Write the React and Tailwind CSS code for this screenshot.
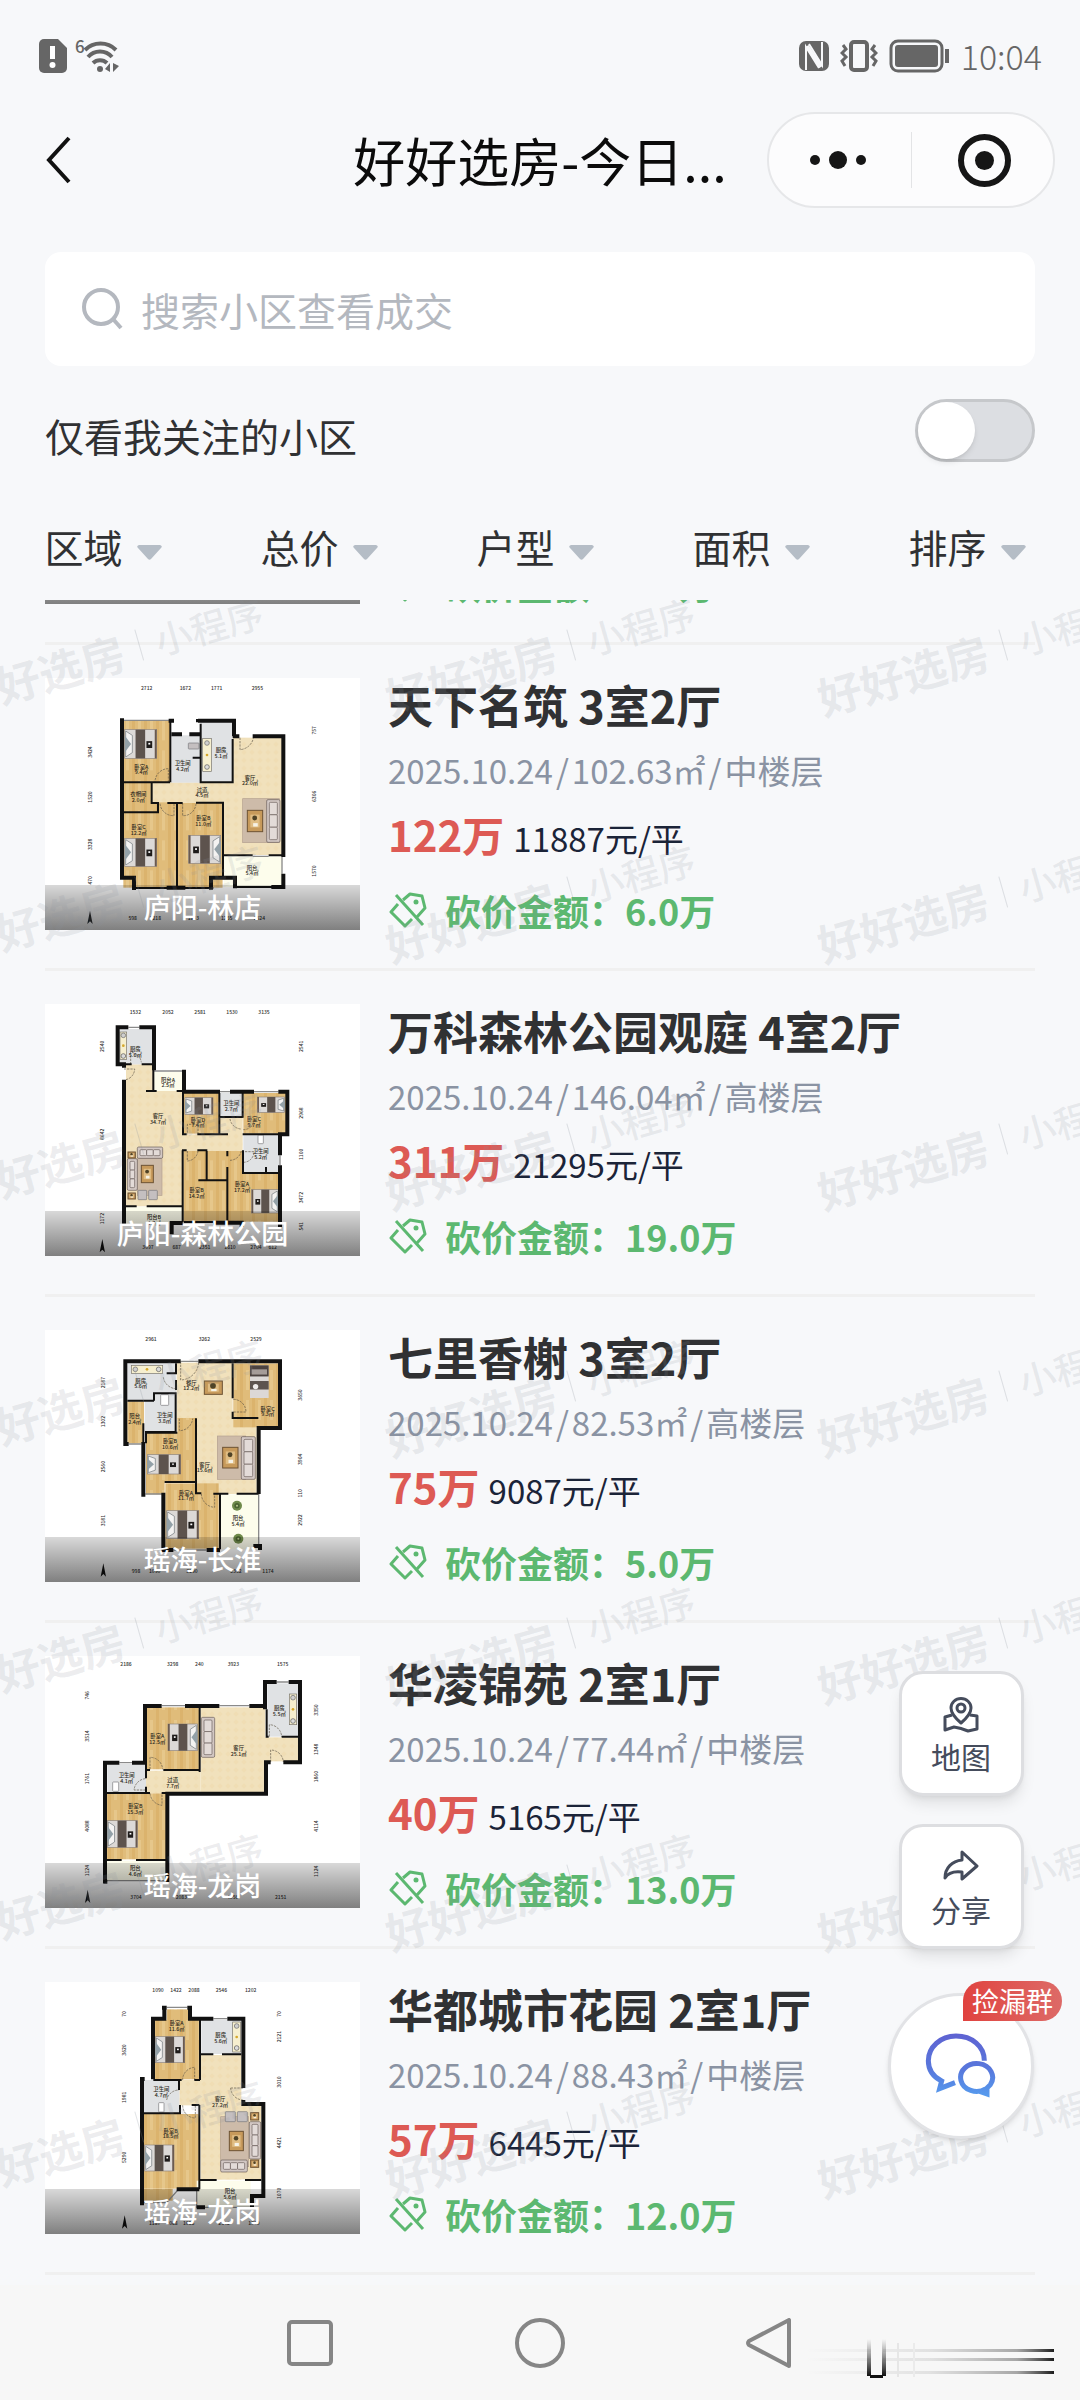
import React, { useLayoutEffect, useRef, useState } from "react";

const ROOM_FILLS = {
  wood: "url(#wood)",
  tile: "url(#tile)",
  wet: "#e0e2e4",
  balcony: "#fdfdec",
};

// Each plan is drawn in a 945 x 756 space that starts at x = 135, y = top
const PLAN_LINDIAN = {
  top: 53,
  rooms: [
    ["tile", 456, 366, 246, 62], ["tile", 698, 232, 148, 352], ["tile", 668, 366, 34, 218],
    ["wood", 368, 182, 142, 184], ["wood", 368, 366, 86, 90], ["wood", 370, 456, 160, 226],
    ["wood", 400, 426, 130, 34], ["wood", 533, 428, 135, 254],
    ["wet", 514, 225, 88, 142], ["wet", 602, 186, 94, 180], ["balcony", 672, 588, 174, 92],
  ],
  thick: "M366 174V652H402V682M506 181H522M594 181H702V228M594 176V186M698 228H718M758 228H850V590M850 640V680H814M500 682H556M396 683H408M633 688V652H705V684M514 222H546M568 222H602",
  thin: "M366 366H510M511 182V366M602 190V366H698V236M578 292H602M455 366V428H474V456H366M502 428H548M531 428V680M588 427H669V648M668 585H758M806 585H846M402 683H640M710 680H846",
  light: "M372 180H510M846 590V640M758 588H806",
  doors: "M720 232V268A44 44 0 0 0 760 234M505 365V325A40 40 0 0 0 465 365M480 430A40 40 0 0 0 522 466V430M588 430A38 38 0 0 1 548 466V430",
  beds: [[374, 208, 96, 86, "left"], [374, 534, 96, 84, "left"], [566, 525, 96, 84, "right"]],
  rugs: [[728, 415, 110, 132]],
  sofas: [[800, 418, 40, 128]],
  tables: [[742, 450, 46, 64]],
  counters: [[608, 235, 26, 98]],
  boxes: [[565, 248, 32, 18]],
  labels: [[424, 325, "卧室A", "9.4㎡"], [548, 314, "卫生间", "4.2㎡"], [663, 276, "厨房", "5.1㎡"], [750, 358, "客厅", "22.0㎡"], [606, 394, "过道", "4.5㎡"], [415, 408, "衣帽间", "2.0㎡"], [416, 506, "卧室C", "12.2㎡"], [610, 480, "卧室B", "11.0㎡"], [756, 628, "阳台", "5.4㎡"]],
  topDims: [84, [440, "2712"], [556, "1672"], [650, "1771"], [772, "2955"]],
  bottomDims: [775, [398, "598"], [466, "2218"], [580, "1833"], [680, "1255"], [778, "2524"]],
  leftDims: [270, [275, "3424"], [410, "1520"], [552, "3328"], [660, "470"]],
  rightDims: [942, [210, "757"], [408, "6306"], [632, "1570"]],
};

const PLAN_FOREST = {
  top: 71,
  rooms: [
    ["tile", 378, 252, 82, 82], ["tile", 378, 332, 170, 346], ["tile", 546, 462, 182, 50], ["tile", 660, 410, 68, 54],
    ["wet", 356, 146, 104, 106], ["wet", 660, 338, 66, 72], ["wet", 730, 464, 108, 114],
    ["balcony", 462, 274, 88, 58], ["balcony", 378, 680, 168, 50],
    ["wood", 552, 338, 104, 122], ["wood", 730, 338, 130, 122], ["wood", 550, 512, 178, 214],
    ["wood", 684, 578, 154, 146],
  ],
  thick: "M353 135V258M348 141H385M418 141H462V270M348 252H378M372 298V730M372 258V262M552 268V334H660M690 334H762M835 334H862V462H840V525M840 555V740M515 762V728H548M640 727H684M684 727H725V740",
  thin: "M378 252H395M425 252H460V332M438 332H470M530 332H552M549 332V462M546 462H560M592 462H684M658 338V462M658 410H728M728 338V412M728 462H860M729 510V578H838M798 560V578M620 512V600M595 600H682M682 512V528M682 560V726M546 510H560M592 510H622M548 510V726M378 678H410M440 678H548M552 725H640",
  light: "M385 141H418M660 334H690M762 334H835M840 525V555M462 272H550",
  doors: "M378 298A34 34 0 0 0 404 266H372M392 252V216A34 34 0 0 1 424 246M594 462V432H562V462M562 512V542A34 34 0 0 0 594 512M690 416A36 36 0 0 0 722 446M762 420A32 32 0 0 1 730 448M690 540A36 36 0 0 0 724 512M730 546A32 32 0 0 0 762 514H730",
  beds: [[555, 352, 84, 50, "left"], [772, 350, 82, 46, "right"], [755, 628, 80, 70, "right"]],
  rugs: [[412, 535, 74, 110]],
  sofas: [[382, 535, 30, 95], [412, 500, 76, 34]],
  tables: [[424, 555, 36, 52], [384, 515, 22, 18], [384, 638, 22, 18]],
  counters: [[360, 155, 20, 82]],
  boxes: [[414, 630, 26, 28], [446, 630, 26, 28], [774, 464, 16, 26]],
  labels: [[406, 212, "厨房", "5.6㎡"], [504, 304, "阳台A", "2.5㎡"], [474, 414, "客厅", "34.7㎡"], [594, 424, "卧室D", "7.4㎡"], [694, 374, "卫生间", "2.7㎡"], [762, 422, "卧室C", "9.7㎡"], [782, 518, "卫生间", "5.2㎡"], [590, 636, "卧室B", "14.2㎡"], [726, 618, "卧室A", "17.2㎡"], [462, 716, "阳台B", "4.7㎡"]],
  topDims: [96, [406, "1532"], [504, "2052"], [600, "2581"], [696, "1530"], [792, "3135"]],
  bottomDims: [800, [444, "3097"], [530, "687"], [614, "2351"], [690, "1610"], [768, "2704"], [818, "612"]],
  leftDims: [307, [198, "2540"], [462, "8642"], [715, "1172"]],
  rightDims: [905, [198, "2541"], [398, "2968"], [522, "1100"], [652, "3472"], [738, "541"]],
};

const PLAN_CHANGHUAI = {
  top: 60,
  rooms: [
    ["tile", 530, 158, 168, 168], ["tile", 590, 322, 180, 230],
    ["wood", 700, 160, 134, 192], ["wood", 382, 274, 50, 126], ["wood", 438, 368, 150, 150],
    ["wood", 438, 515, 56, 38], ["wood", 532, 324, 56, 50], ["wood", 496, 520, 160, 196],
    ["wet", 382, 160, 146, 112], ["wet", 434, 250, 94, 116], ["balcony", 662, 553, 114, 165],
  ],
  thick: "M376 148V402M370 402H386M370 154H542M595 154H840V354H776V552M430 396V560M490 548V720H520M620 720H660M760 708H780V720",
  thin: "M528 160V190H500M528 210V240M462 272V250H527V366H438V400M430 340V398M382 272H462M438 368H532M588 325V550H604M494 516H588M640 551H660V718M698 160V265M698 305V324H775M660 551H685M710 551H775",
  light: "M386 402H424M436 552H486M542 154H595M776 552V708M520 720H620M782 354H830",
  doors: "M542 154V210A56 56 0 0 0 596 156M490 202A40 40 0 0 0 528 236M538 326V362A40 40 0 0 0 578 326M700 268A38 38 0 0 1 738 306H700M604 552A42 42 0 0 0 644 592V552",
  beds: [[750, 166, 56, 98, "top"], [442, 434, 100, 58, "left"], [500, 602, 96, 84, "left"]],
  rugs: [[652, 378, 85, 130]],
  sofas: [[724, 380, 42, 128]],
  tables: [[613, 213, 54, 40], [668, 412, 46, 62]],
  counters: [[394, 166, 94, 24]],
  boxes: [[482, 254, 24, 32]],
  plants: [[711, 587], [715, 686]],
  labels: [[422, 218, "厨房", "5.6㎡"], [574, 224, "餐厅", "12.2㎡"], [803, 302, "卧室C", "9.3㎡"], [404, 324, "阳台", "2.4㎡"], [494, 322, "卫生间", "3.8㎡"], [510, 400, "卧室B", "10.6㎡"], [614, 470, "客厅", "15.6㎡"], [558, 554, "卧室A", "11.7㎡"], [714, 630, "阳台", "5.4㎡"]],
  topDims: [88, [453, "2961"], [613, "3262"], [768, "2529"]],
  bottomDims: [784, [408, "998"], [464, "1090"], [576, "3290"], [708, "2352"], [804, "1174"]],
  leftDims: [310, [218, "2187"], [335, "1302"], [470, "2560"], [632, "3181"]],
  rightDims: [902, [255, "3650"], [448, "3904"], [550, "110"], [630, "2922"]],
};

const PLAN_HUALING = {
  top: 78,
  rooms: [
    ["tile", 602, 232, 194, 256], ["tile", 438, 422, 164, 68], ["tile", 794, 322, 100, 72],
    ["wood", 440, 232, 158, 186], ["wood", 320, 490, 178, 198],
    ["wet", 802, 160, 92, 160], ["wet", 322, 402, 116, 84], ["balcony", 320, 692, 178, 60],
  ],
  thick: "M430 228H485M555 228H658M748 228H800M795 238V156H830M866 156H900V397H850M812 397H798V491H502V690M435 222V402M396 398H438M358 398H315V760M502 690V756M310 755H322",
  thin: "M599 232V420H490M438 420H450M599 420V426M438 402V445M438 470V490M320 489H450M485 489H505M845 320H894M800 238V320H806M320 690H365M408 690H500",
  light: "M485 227H555M658 227H748M830 156H866M358 398H396M320 752H500M318 694V750",
  doors: "M450 418V382A38 38 0 0 1 488 418M436 446A38 38 0 0 0 402 480H436M450 490A40 40 0 0 0 486 526V490M808 320V284A38 38 0 0 1 845 320M812 396V360A38 38 0 0 1 850 396",
  beds: [[504, 282, 88, 80, "right"], [322, 572, 90, 80, "left"]],
  rugs: [],
  sofas: [[604, 262, 40, 120]],
  tables: [],
  counters: [[868, 192, 22, 92]],
  boxes: [[338, 456, 18, 28]],
  labels: [[472, 325, "卧室A", "12.5㎡"], [838, 240, "厨房", "5.5㎡"], [716, 360, "客厅", "25.1㎡"], [380, 442, "卫生间", "4.1㎡"], [518, 456, "过道", "7.7㎡"], [406, 534, "卧室B", "15.3㎡"], [406, 720, "阳台", "4.6㎡"]],
  topDims: [104, [378, "2186"], [518, "3298"], [598, "240"], [700, "3923"], [848, "1575"]],
  bottomDims: [803, [408, "3704"], [544, "2083"], [698, "4056"], [842, "2151"]],
  leftDims: [263, [196, "746"], [318, "3514"], [446, "1761"], [588, "4088"], [722, "1124"]],
  rightDims: [950, [240, "3350"], [358, "1348"], [440, "1860"], [588, "4114"], [724, "1124"]],
};

const PLAN_HUADU = {
  top: 66,
  rooms: [
    ["tile", 602, 285, 122, 374], ["tile", 538, 360, 66, 76], ["tile", 722, 436, 62, 222],
    ["wood", 465, 180, 132, 178], ["wood", 500, 148, 66, 34], ["wood", 432, 462, 166, 224], ["wood", 432, 686, 86, 36],
    ["wet", 604, 180, 120, 102], ["wet", 432, 360, 106, 98], ["balcony", 590, 662, 162, 84],
  ],
  thick: "M459 170V358M454 176H493V138M570 138V176H640M682 176H730V384M730 420V432H790V708H756V742M426 352V736M420 357H434M530 688H598M590 742H615M486 143H500M562 143H576",
  thin: "M460 360H545M583 360H600M600 180V360M600 283H640M666 283H724M537 362V390M432 460H540V435M598 435V688M575 435H598M600 660H650M735 660H784",
  light: "M500 142H562M640 176H682M590 692V742H750M432 728H500L532 692",
  doors: "M548 360V356A38 38 0 0 1 584 322V360M500 420A38 38 0 0 1 537 390M548 436A38 38 0 0 0 586 474V436M692 384A38 38 0 0 0 730 420M692 384H730",
  beds: [[466, 230, 88, 78, "left"], [434, 555, 88, 78, "left"]],
  rugs: [[662, 470, 84, 150]],
  sofas: [[748, 485, 34, 112], [662, 600, 80, 36]],
  tables: [[688, 514, 42, 58], [752, 458, 24, 22], [752, 600, 24, 22]],
  counters: [[698, 186, 24, 90]],
  boxes: [[676, 455, 30, 30], [712, 455, 30, 30], [476, 428, 16, 28]],
  labels: [[530, 196, "卧室A", "11.6㎡"], [662, 232, "厨房", "5.6㎡"], [484, 394, "卫生间", "4.7㎡"], [660, 424, "客厅", "27.2㎡"], [512, 518, "卧室B", "18.5㎡"], [690, 700, "阳台", "5.6㎡"]],
  topDims: [92, [474, "1090"], [528, "1422"], [582, "2088"], [664, "2546"], [752, "1202"]],
  bottomDims: [790, [464, "1187"], [516, "2068"], [566, "1086"], [672, "2546"], [762, "1200"]],
  leftDims: [374, [162, "70"], [270, "3620"], [412, "1981"], [592, "5290"]],
  rightDims: [838, [162, "70"], [230, "2121"], [366, "3010"], [548, "4421"], [700, "1070"]],
};

const LISTINGS = [
  { id: 1, name: "林店花园", rooms: "2室2厅", area: "庐阳-林店", date: "2025.10.24", size: "88.50", floor: "中楼层", total: "98", unit: "11073", cut: "5.0", plan: PLAN_LINDIAN },
  { id: 2, name: "天下名筑", rooms: "3室2厅", area: "庐阳-林店", date: "2025.10.24", size: "102.63", floor: "中楼层", total: "122", unit: "11887", cut: "6.0", plan: PLAN_LINDIAN },
  { id: 3, name: "万科森林公园观庭", rooms: "4室2厅", area: "庐阳-森林公园", date: "2025.10.24", size: "146.04", floor: "高楼层", total: "311", unit: "21295", cut: "19.0", plan: PLAN_FOREST },
  { id: 4, name: "七里香榭", rooms: "3室2厅", area: "瑶海-长淮", date: "2025.10.24", size: "82.53", floor: "高楼层", total: "75", unit: "9087", cut: "5.0", plan: PLAN_CHANGHUAI },
  { id: 5, name: "华凌锦苑", rooms: "2室1厅", area: "瑶海-龙岗", date: "2025.10.24", size: "77.44", floor: "中楼层", total: "40", unit: "5165", cut: "13.0", plan: PLAN_HUALING },
  { id: 6, name: "华都城市花园", rooms: "2室1厅", area: "瑶海-龙岗", date: "2025.10.24", size: "88.43", floor: "中楼层", total: "57", unit: "6445", cut: "12.0", plan: PLAN_HUADU },
];

const FILTERS = ["区域", "总价", "户型", "面积", "排序"];

function Bed({ x, y, w, h, side }) {
  if (side === "top") {
    return (
      <g>
        <rect x={x} y={y} width={w} height={h} fill="#dcd8d6" />
        <rect x={x} y={y} width={w} height={h * 0.34} fill="#4c4340" />
        <rect x={x + 5} y={y + 12} width={w - 10} height={h * 0.16} fill="#a59c98" />
        <rect x={x} y={y + h * 0.48} width={w} height={h * 0.26} fill="#5d544f" />
        <circle cx={x + w * 0.3} cy={y + h * 0.65} r="8" fill="#efeceb" />
      </g>
    );
  }
  const flip = side === "right" ? `translate(${2 * x + w} 0) scale(-1 1)` : undefined;
  return (
    <g transform={flip}>
      <rect x={x} y={y} width={w} height={h} fill="#dcd9d7" stroke="#8d8581" strokeWidth="2" />
      <path d={`M${x + 3} ${y + 4}L${x + w * 0.24} ${y + h * 0.2}V${y + h * 0.8}L${x + 3} ${y + h - 4}Z`} fill="#f4f3f2" stroke="#6d7478" strokeWidth="2" />
      <path d={`M${x} ${y + h * 0.2}L${x + w * 0.2} ${y + h * 0.5}L${x} ${y + h * 0.8}Z`} fill="#93a1a8" />
      <rect x={x + w * 0.34} y={y} width={w * 0.3} height={h} fill="#5d534d" />
      <rect x={x + w * 0.94} y={y} width={w * 0.06} height={h} fill="#6a5a50" />
      <rect x={x + w * 0.68} y={y + h * 0.4} width={w * 0.18} height={h * 0.24} fill="#1e1b1a" />
      <rect x={x + w * 0.74} y={y + h * 0.46} width={w * 0.06} height={h * 0.06} fill="#fff" />
    </g>
  );
}

function Sofa({ x, y, w, h }) {
  const tall = h > w;
  const seats = [0, 1, 2];
  return (
    <g fill="#d3c8c4" stroke="#665a58" strokeWidth="2">
      <rect x={x} y={y} width={w} height={h} rx="4" />
      {seats.map((i) =>
        tall ? (
          <rect key={i} x={x + 8} y={y + 8 + (i * (h - 16)) / 3} width={w - 16} height={(h - 16) / 3} rx="3" fill="#e3dbd8" />
        ) : (
          <rect key={i} x={x + 8 + (i * (w - 16)) / 3} y={y + 8} width={(w - 16) / 3} height={h - 16} rx="3" fill="#e3dbd8" />
        )
      )}
    </g>
  );
}

function FloorPlan({ plan, name }) {
  const [topY, ...topDims] = plan.topDims;
  const [bottomY, ...bottomDims] = plan.bottomDims;
  const [leftX, ...leftDims] = plan.leftDims;
  const [rightX, ...rightDims] = plan.rightDims;

  return (
    <svg viewBox={`135 ${plan.top} 945 756`} className="block w-full h-full bg-white" role="img" aria-label={`${name}户型图`}>
      {plan.rooms.map(([type, x, y, w, h], i) => (
        <rect key={i} x={x} y={y} width={w} height={h} fill={ROOM_FILLS[type]} />
      ))}
      {plan.rugs.map(([x, y, w, h], i) => (
        <rect key={i} x={x} y={y} width={w} height={h} fill="#cdbba9" stroke="#b3a08f" strokeWidth="2" />
      ))}
      {plan.sofas.map(([x, y, w, h], i) => (
        <Sofa key={i} x={x} y={y} w={w} h={h} />
      ))}
      {plan.tables.map(([x, y, w, h], i) => (
        <g key={i}>
          <rect x={x} y={y} width={w} height={h} fill="#c79a5b" stroke="#6e5334" strokeWidth="3" />
          <rect x={x + w * 0.2} y={y + h * 0.2} width={w * 0.6} height={h * 0.6} fill="#e0bd84" />
          <circle cx={x + w * 0.48} cy={y + h * 0.36} r={w * 0.16} fill="#4f4327" />
          <rect x={x + w * 0.38} y={y + h * 0.6} width={w * 0.3} height={h * 0.16} fill="#f6f2e6" />
        </g>
      ))}
      {plan.counters.map(([x, y, w, h], i) => (
        <g key={i}>
          <rect x={x} y={y} width={w} height={h} fill="#f6efcf" stroke="#77736a" strokeWidth="2" />
          <circle cx={x + Math.min(w, h) / 2} cy={y + Math.min(w, h) / 2} r="7" fill="#cfcfcf" stroke="#666" strokeWidth="2" />
          <circle cx={x + w / 2} cy={y + h / 2} r="4" fill="#d5a72b" />
          <circle cx={x + w - Math.min(w, h) / 2} cy={y + h - Math.min(w, h) / 2} r="7" fill="#dcdcdc" stroke="#555" strokeWidth="2" />
        </g>
      ))}
      {plan.boxes.map(([x, y, w, h], i) => (
        <rect key={i} x={x} y={y} width={w} height={h} rx="2" fill={w === h || w > 24 ? "#c4bfc0" : "#fff"} stroke="#77777a" strokeWidth="2" />
      ))}
      {(plan.plants || []).map(([x, y]) => (
        <g key={y}>
          <circle cx={x} cy={y} r="15" fill="#6f8a4a" />
          <circle cx={x} cy={y} r="8" fill="#4a6330" />
          <circle cx={x} cy={y} r="3" fill="#b7c48e" />
        </g>
      ))}
      {plan.beds.map(([x, y, w, h, side], i) => (
        <Bed key={i} x={x} y={y} w={w} h={h} side={side} />
      ))}
      <path d={plan.doors} fill="none" stroke="#5f5647" strokeWidth="2" strokeDasharray="7 3" />
      <path d={plan.light} fill="none" stroke="#8a8a8a" strokeWidth="4" />
      <path d={plan.thin} fill="none" stroke="#111" strokeWidth="6" />
      <path d={plan.thick} fill="none" stroke="#111" strokeWidth="12" />

      <g fill="#2b2820" fontSize="16" fontWeight="500" textAnchor="middle">
        {plan.labels.map(([x, y, room, size]) => (
          <text key={`${x}-${y}`}>
            <tspan x={x} y={y}>{room}</tspan>
            <tspan x={x} y={y + 17}>{size}</tspan>
          </text>
        ))}
      </g>

      <g fill="#333" fontSize="15" fontWeight="500" textAnchor="middle">
        {topDims.map(([x, text]) => (
          <text key={x} x={x} y={topY + 5}>{text}</text>
        ))}
        {bottomDims.map(([x, text]) => (
          <text key={x} x={x} y={bottomY + 5}>{text}</text>
        ))}
        {leftDims.map(([y, text]) => (
          <text key={y} transform={`translate(${leftX + 5} ${y}) rotate(-90)`}>{text}</text>
        ))}
        {rightDims.map(([y, text]) => (
          <text key={y} transform={`translate(${rightX + 5} ${y}) rotate(-90)`}>{text}</text>
        ))}
      </g>
      <path
        d={`M${leftX} ${bottomY - 24}L${leftX + 8} ${bottomY + 16}L${leftX} ${bottomY + 8}L${leftX - 8} ${bottomY + 16}Z`}
        fill="#111"
      />
    </svg>
  );
}

function PlanPatterns() {
  return (
    <svg className="absolute w-0 h-0" aria-hidden="true">
      <defs>
        <pattern id="wood" width="36" height="90" patternUnits="userSpaceOnUse">
          <rect width="36" height="90" fill="#e0bc7a" />
          <rect x="0" width="9" height="90" fill="#dbb36d" />
          <rect x="18" width="9" height="60" fill="#e6c78b" />
        </pattern>
        <pattern id="tile" width="24" height="24" patternUnits="userSpaceOnUse">
          <rect width="24" height="24" fill="#f1e1bc" />
          <path d="M12 4L20 12L12 20L4 12Z" fill="#f0ddb4" />
        </pattern>
      </defs>
    </svg>
  );
}

function StatusBar() {
  return (
    <div className="h-28 pl-[39px] pr-[38px] flex items-center justify-between text-[#666]">
      <div className="flex items-center gap-2">
        <svg width="28" height="34" viewBox="0 0 28 34" fill="currentColor" aria-hidden="true">
          <path d="M5 0H19L28 9V29A5 5 0 0 1 23 34H5A5 5 0 0 1 0 29V5A5 5 0 0 1 5 0Z" />
          <path d="M11 7H16V20H11Z" fill="#fff" />
          <circle cx="13.5" cy="26" r="3" fill="#fff" />
        </svg>
        <svg width="46" height="36" viewBox="0 0 46 36" fill="none" stroke="currentColor" strokeWidth="4" aria-hidden="true">
          <text x="0" y="15" fontSize="17" fontWeight="500" fill="currentColor" stroke="none">6</text>
          <path d="M10 12A22 22 0 0 1 41 12" />
          <path d="M13 19A16 16 0 0 1 37 19" />
          <path d="M18 25A10 10 0 0 1 32 25" />
          <circle cx="25" cy="31" r="3" fill="currentColor" stroke="none" />
          <path d="M35 25V34L30 31ZM38 25L44 28L38 34Z" fill="currentColor" stroke="none" />
        </svg>
      </div>
      <div className="flex items-center gap-[11px]">
        <svg width="30" height="32" viewBox="0 0 30 32" aria-hidden="true">
          <rect x="0" y="1" width="30" height="30" rx="7" fill="currentColor" />
          <path d="M7 30V7L20 28" fill="none" stroke="#f7f8fa" strokeWidth="2" />
          <path d="M23 2V25L10 4" fill="none" stroke="#f7f8fa" strokeWidth="2" />
          <path d="M8 6L22 27" stroke="#f7f8fa" strokeWidth="4" />
        </svg>
        <svg width="38" height="34" viewBox="0 0 38 34" fill="none" stroke="currentColor" strokeWidth="4" aria-hidden="true">
          <rect x="11" y="3" width="16" height="28" rx="3" />
          <path d="M3 6L6 10L2 14L6 18L2 22L5 27M35 6L32 10L36 14L32 18L36 22L33 27" strokeWidth="3" />
        </svg>
        <svg width="61" height="34" viewBox="0 0 61 34" fill="none" stroke="currentColor" strokeWidth="3" aria-hidden="true">
          <rect x="2" y="2" width="51" height="30" rx="7" />
          <rect x="6" y="6" width="43" height="22" rx="3" fill="currentColor" stroke="none" />
          <path d="M58 10V24" strokeWidth="4" />
        </svg>
        <span className="text-[34px] leading-[38px] font-light">10:04</span>
      </div>
    </div>
  );
}

function NavBar() {
  return (
    <div className="h-24 px-[25px] grid grid-cols-[1fr_auto_1fr] items-center">
      <button type="button" aria-label="返回" className="ml-5 justify-self-start">
        <svg width="28" height="48" viewBox="0 0 28 48" fill="none" stroke="#111" strokeWidth="4">
          <path d="M24 2L4 24L24 46" />
        </svg>
      </button>
      <h1 className="text-[52px] leading-[64px] text-[#0b0b0b]">好好选房-今日...</h1>
      <div className="justify-self-end w-[288px] h-24 rounded-full border-2 border-[#e6e7e9] bg-[#fcfcfd] flex items-center">
        <button type="button" aria-label="更多" className="flex-1 h-full pr-1 flex items-center justify-center gap-[9px]">
          <span className="size-[10px] rounded-full bg-[#161616]" />
          <span className="size-[18px] rounded-full bg-[#161616]" />
          <span className="size-[10px] rounded-full bg-[#161616]" />
        </button>
        <span className="w-px h-14 bg-[#e3e4e6]" />
        <button type="button" aria-label="关闭" className="flex-1 h-full pl-1 flex items-center justify-center">
          <span className="size-[53px] rounded-full border-[6px] border-[#161616] flex items-center justify-center">
            <span className="size-[19px] rounded-full bg-[#161616]" />
          </span>
        </button>
      </div>
    </div>
  );
}

function Header() {
  const [onlyFollowed, setOnlyFollowed] = useState(false);

  return (
    <header className="shrink-0">
      <StatusBar />
      <NavBar />

      <div className="mx-[45px] mt-11 h-[114px] px-9 rounded-2xl bg-white flex items-center gap-[18px]">
        <svg width="42" height="42" viewBox="0 0 42 42" fill="none" stroke="#b4b8bf" strokeWidth="4" aria-hidden="true">
          <circle cx="20" cy="19" r="17" />
          <path d="M32 31L40 40" />
        </svg>
        <input
          type="search"
          aria-label="搜索小区"
          placeholder="搜索小区查看成交"
          className="flex-1 min-w-0 h-full bg-transparent outline-none text-[39px] text-[#303133] placeholder:text-[#b4b8bf]"
        />
      </div>

      <label className="mx-[45px] mt-[33px] flex items-end justify-between">
        <span className="text-[39px] leading-[54px] text-[#303133]">仅看我关注的小区</span>
        <input
          type="checkbox"
          role="switch"
          checked={onlyFollowed}
          onChange={(e) => setOnlyFollowed(e.target.checked)}
          className="appearance-none w-[120px] h-[63px] rounded-full border-[3px] border-[#c6c8cb] bg-[#dcdee2] checked:bg-[#5cb870] before:block before:size-[57px] before:rounded-full before:bg-white before:shadow-md checked:before:ml-auto"
        />
      </label>

      <div className="mt-[34px] h-[104px] pb-1 flex items-center">
        {FILTERS.map((filter) => (
          <button key={filter} type="button" className="flex-1 pr-[10px] flex items-center justify-center gap-[14px]">
            <span className="text-[39px] leading-[48px] text-[#303133]">{filter}</span>
            <svg width="25" height="15" viewBox="0 0 25 15" className="mt-3" aria-hidden="true">
              <path d="M2 0H23Q26 1 24 3L14 14Q12.500 15.500 11 14L1 3Q-1 1 2 0Z" fill="#b5bdc6" />
            </svg>
          </button>
        ))}
      </div>
    </header>
  );
}

function BargainIcon() {
  return (
    <svg width="39" height="36" viewBox="-2 0 39 36" fill="none" stroke="currentColor" strokeWidth="3" strokeLinejoin="round" aria-hidden="true">
      <path d="M6 3L33 33" />
      <path d="M13 8L20 2L32 4L35 16L27 25" />
      <path d="M8 12L1 20L15 34L22 27" />
      <circle cx="26" cy="10" r="2.500" fill="currentColor" stroke="none" />
    </svg>
  );
}

function ListingRow({ item }) {
  return (
    <li className="pt-[33px] pb-[38px] border-b-[3px] border-[#f0f0f0] flex items-start gap-7">
      <div className="relative shrink-0 w-[315px] h-[252px] overflow-hidden">
        <FloorPlan plan={item.plan} name={item.name} />
        <p className="absolute inset-x-0 bottom-0 h-[45px] text-center text-[27px] leading-[44px] font-medium text-white bg-linear-to-b from-black/15 to-black/50">
          {item.area}
        </p>
      </div>

      <div className="flex-1 min-w-0">
        <h2 className="text-[45px] leading-[54px] font-bold text-[#303133] whitespace-nowrap">
          {item.name} {item.rooms}
        </h2>
        <p className="mt-4 flex gap-[3px] text-[33px] leading-[44px] text-[#8a93a3]">
          <span>{item.date}</span>
          <span>/</span>
          <span>{item.size}㎡</span>
          <span>/</span>
          <span>{item.floor}</span>
        </p>
        <p className="mt-4 h-[52px] flex items-baseline gap-[9px]">
          <span className="text-[42px] leading-[52px] font-bold text-[#dd5a54]">{item.total}万</span>
          <span className="text-[33px] leading-9 text-[#1b2438]">{item.unit}元/平</span>
        </p>
        <p className="mt-8 flex items-center gap-[18px] text-[36px] leading-9 font-bold text-[#5cb870]">
          <BargainIcon />
          砍价金额：{item.cut}万
        </p>
      </div>
    </li>
  );
}

function Watermark() {
  return (
    <div className="absolute inset-0 overflow-hidden pointer-events-none" aria-hidden="true">
      <div className="-mt-[70px] grid grid-cols-[repeat(3,432px)] auto-rows-[247px] justify-center">
        {Array.from({ length: 21 }, (_, i) => (
          <div key={i} className="flex items-center justify-center">
            <div className="shrink-0 -rotate-[16deg] flex items-center gap-4 whitespace-nowrap text-[#8c929c]/16">
              <span className="text-[44px] leading-none font-bold">好好选房</span>
              <span className="w-px h-8 bg-[#8c929c]/25" />
              <span className="text-[37px] leading-none font-medium">小程序</span>
            </div>
          </div>
        ))}
      </div>
    </div>
  );
}

function FloatingActions() {
  const card =
    "size-[125px] rounded-3xl border-[3px] border-[#dddee1] bg-white shadow-lg flex flex-col items-center text-[30px] leading-9 text-[#454c5c]";

  return (
    <div className="absolute right-[46px] bottom-[146px] flex flex-col items-center gap-7">
      <button type="button" className={`${card} pt-[23px] gap-[5px]`}>
        <svg width="36" height="36" viewBox="0 0 36 36" fill="none" stroke="currentColor" strokeWidth="3" strokeLinejoin="round" aria-hidden="true">
          <path d="M18 26C11 20 8 16 8 11A10 9.500 0 0 1 28 11C28 16 25 20 18 26Z" />
          <circle cx="18" cy="11" r="4" />
          <path d="M9 18L2 20V33L11 30Q18 31 25 34L34 32V19L27 18" />
        </svg>
        地图
      </button>
      <button type="button" className={`${card} pt-[23px] gap-[9px]`}>
        <svg width="36" height="32" viewBox="0 0 36 32" fill="none" stroke="currentColor" strokeWidth="3" strokeLinejoin="round" aria-hidden="true">
          <path d="M19 2L34 16L19 29V22C11 21 5 23 2 28C2 18 9 11 19 10Z" />
        </svg>
        分享
      </button>
      <button type="button" className="relative mt-4 size-[146px] rounded-full border-[3px] border-[#e2e3e6] bg-white shadow-md flex items-center justify-center">
        <svg width="72" height="68" viewBox="440 1184 216 204" fill="none" stroke="url(#chat)" strokeWidth="15" aria-hidden="true">
          <defs>
            <linearGradient id="chat" gradientUnits="userSpaceOnUse" x1="0" y1="1190" x2="0" y2="1385">
              <stop offset="0" stopColor="#5f63d2" />
              <stop offset="0.55" stopColor="#5878dc" />
              <stop offset="1" stopColor="#569ff0" />
            </linearGradient>
          </defs>
          <path d="M618 1270C618 1226 580 1196 533 1196C486 1196 450 1230 450 1270C450 1300 468 1320 490 1331L484 1354L530 1336" />
          <path d="M622 1355A48 42 0 1 1 636 1342L626 1352L626 1370L604 1362" />
        </svg>
        <span className="absolute -top-[15px] -right-[31px] h-10 px-[9px] rounded-full rounded-bl-md bg-linear-to-r from-[#e0423f] to-[#dd6a67] text-[27px] leading-10 text-white whitespace-nowrap">
          捡漏群
        </span>
      </button>
    </div>
  );
}

function SystemNav() {
  return (
    <nav className="relative shrink-0 h-[115px] bg-[#f7f7f7] flex items-center justify-center gap-[180px]">
      <button type="button" aria-label="最近任务">
        <svg width="50" height="50" viewBox="0 0 50 50" fill="none" stroke="#868686" strokeWidth="4">
          <rect x="4" y="4" width="42" height="42" rx="3" />
        </svg>
      </button>
      <button type="button" aria-label="主屏幕">
        <svg width="50" height="50" viewBox="0 0 50 50" fill="none" stroke="#868686" strokeWidth="4">
          <circle cx="25" cy="25" r="23" />
        </svg>
      </button>
      <button type="button" aria-label="后退">
        <svg width="50" height="50" viewBox="0 0 50 50" fill="none" stroke="#868686" strokeWidth="4" strokeLinejoin="round">
          <path d="M44 2V48L4 27Q2 25 4 23Z" />
        </svg>
      </button>
      <svg width="260" height="44" viewBox="0 0 260 44" className="absolute right-[24px] bottom-[21px]" aria-hidden="true">
        <defs>
          <linearGradient id="streak" x1="0" x2="1" y1="0" y2="0">
            <stop offset="0" stopColor="#777" stopOpacity="0" />
            <stop offset="0.5" stopColor="#666" stopOpacity="0.15" />
            <stop offset="0.85" stopColor="#444" stopOpacity="0.45" />
            <stop offset="1" stopColor="#111" stopOpacity="0.95" />
          </linearGradient>
          <linearGradient id="drop" x1="0" x2="0" y1="0" y2="1">
            <stop offset="0" stopColor="#333" stopOpacity="0" />
            <stop offset="1" stopColor="#111" />
          </linearGradient>
        </defs>
        <rect x="10" y="14" width="248" height="3" fill="url(#streak)" />
        <rect x="10" y="23" width="248" height="3" fill="url(#streak)" />
        <rect x="10" y="36" width="248" height="3" fill="url(#streak)" />
        <rect x="75" y="8" width="12" height="34" fill="#f7f7f7" />
        <rect x="71" y="4" width="4" height="37" fill="url(#drop)" />
        <rect x="86" y="4" width="4" height="37" fill="url(#drop)" />
        <rect x="74" y="40" width="13" height="3" fill="#111" />
        <rect x="101" y="8" width="2" height="34" fill="#e6e6e6" />
        <rect x="117" y="8" width="2" height="34" fill="#ebebeb" />
      </svg>
    </nav>
  );
}

function App() {
  const listRef = useRef(null);

  // the list opens just before the end of the first listing
  useLayoutEffect(() => {
    listRef.current.scrollTop = 281;
  }, []);

  return (
    <div className="h-screen flex flex-col bg-[#f7f8fa] font-['Noto_Sans_CJK_SC',sans-serif]">
      <PlanPatterns />
      <Header />
      <main className="relative flex-1 min-h-0">
        <ul ref={listRef} className="h-full px-[45px] pb-10 overflow-y-auto [scrollbar-width:none]">
          {LISTINGS.map((item) => (
            <ListingRow key={item.id} item={item} />
          ))}
        </ul>
        <Watermark />
        <FloatingActions />
      </main>
      <SystemNav />
    </div>
  );
}

export default App;
